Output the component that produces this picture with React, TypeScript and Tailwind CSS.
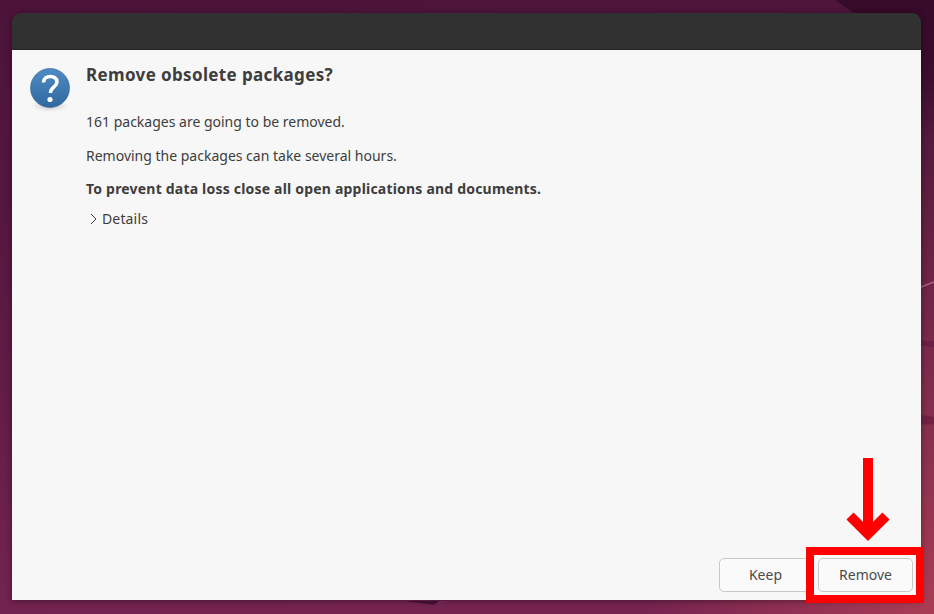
export default function App() {
  return (
    <div className="relative w-[934px] h-[614px] overflow-hidden bg-[linear-gradient(175deg,#4c1339_0%,#571840_35%,#72234f_85%,#78244f_100%)] font-['Noto_Sans',sans-serif]">
      {/* wallpaper */}
      <svg className="absolute inset-0" width="934" height="614" viewBox="0 0 934 614">
        <defs>
          <linearGradient id="side" x1="0" y1="0" x2="0" y2="1">
            <stop offset="0" stopColor="#360a29" />
            <stop offset="0.12" stopColor="#3a0d2b" />
            <stop offset="0.22" stopColor="#521a3b" />
            <stop offset="0.45" stopColor="#6d2446" />
            <stop offset="0.7" stopColor="#86304e" />
            <stop offset="1" stopColor="#a93c55" />
          </linearGradient>
          <linearGradient id="corner" x1="0" y1="0" x2="1" y2="0">
            <stop offset="0" stopColor="#a93c55" stopOpacity="0" />
            <stop offset="1" stopColor="#a93c55" />
          </linearGradient>
        </defs>
        <path d="M835 0 L934 0 L934 70 L921 70 Q880 30 835 0Z" fill="#360a29" />
        <rect x="921" y="0" width="13" height="614" fill="url(#side)" />
        <rect x="650" y="600" width="284" height="14" fill="url(#corner)" />
        <path d="M921 287 L934 282" stroke="#a8607c" strokeWidth="1.5" />
        <path d="M921 340 Q928 342 934 341 L934 347 Q928 346 921 346Z" fill="#6a1f45" />
        <path d="M921 415 L934 417 L934 424 Q928 425 921 424Z" fill="#721f44" />
        <path d="M405 601 L440 601 L434 605 Q420 603 405 601Z" fill="#4a1238" />
        <path d="M434 605 L440 601 L450 601Z" fill="#7c2a66" />
      </svg>

      <div className="absolute left-3 top-[13px] w-[909px] h-[587px] flex flex-col rounded-t-[9px] overflow-hidden shadow-[0_1px_6px_rgba(0,0,0,0.4)]">
        <div className="h-[37px] shrink-0 bg-[#323131] border-b border-[#262525]" />
        <div className="flex-1 flex flex-col bg-[#f7f7f7] text-[#3d3d3d]">
          <div className="flex flex-1 pl-[18px] pt-[18px]">
            <svg width="40" height="46" viewBox="0 0 40 46" className="shrink-0">
              <defs>
                <linearGradient id="q" x1="0" y1="0" x2="0" y2="1">
                  <stop offset="0" stopColor="#4f8cc4" />
                  <stop offset="1" stopColor="#2f689f" />
                </linearGradient>
                <radialGradient id="qs">
                  <stop offset="0" stopColor="#000" stopOpacity="0.18" />
                  <stop offset="1" stopColor="#000" stopOpacity="0" />
                </radialGradient>
              </defs>
              <ellipse cx="20" cy="38" rx="19" ry="6" fill="url(#qs)" />
              <circle cx="20" cy="20" r="19.5" fill="url(#q)" stroke="#2d6295" strokeWidth="0.6" />
              <path d="M13.5 14.5 C13.5 6.5 27 6.5 27 14 C27 19 20.5 19 20.5 25" fill="none" stroke="#fff" strokeWidth="3.6" />
              <circle cx="20" cy="31.5" r="2.6" fill="#fff" />
            </svg>
            <div className="ml-[16px] flex flex-col items-start -mt-[4px]">
              <h1 className="text-[17px] leading-[22px] font-bold tracking-[0.36px]">Remove obsolete packages?</h1>
              <p className="mt-[26px] text-[14px] leading-[20px]">161 packages are going to be removed.</p>
              <p className="mt-[14px] text-[14px] leading-[20px]">Removing the packages can take several hours.</p>
              <p className="mt-[13px] text-[14px] leading-[20px] font-bold tracking-[0.2px]">To prevent data loss close all open applications and documents.</p>
              <div className="mt-[10px] ml-[4px] flex items-center gap-[5px] text-[14px] leading-[20px] tracking-[0.15px]">
                <svg width="7" height="12" viewBox="0 0 7 12">
                  <path d="M1 1 L6 6 L1 11" fill="none" stroke="#3d3d3d" strokeWidth="1" />
                </svg>
                <span>Details</span>
              </div>
            </div>
          </div>
          <div className="flex justify-end gap-[6px] pr-[8px] pb-[8px]">
            <button className="w-[93px] h-[34px] pb-[2px] rounded-[5px] border border-[#c8c8c8] bg-[#fafafa] text-[14px] text-[#4a4a4a]">Keep</button>
            <button className="w-[95px] h-[34px] pb-[2px] rounded-[5px] border border-[#c8c8c8] bg-[#fafafa] text-[14px] text-[#4a4a4a]">Remove</button>
          </div>
        </div>
      </div>

      {/* annotation over the dialog */}
      <div className="absolute left-[806px] top-[547px] w-[118px] h-[56px] border-[8px] border-[#fe0000]" />
      <svg className="absolute left-[846px] top-[458px]" width="44" height="84" viewBox="0 0 44 84">
        <path d="M22 0 V76" stroke="#fe0000" strokeWidth="10" fill="none" />
        <path d="M4 58 L22 76 L40 58" stroke="#fe0000" strokeWidth="10" fill="none" />
      </svg>
    </div>
  );
}
